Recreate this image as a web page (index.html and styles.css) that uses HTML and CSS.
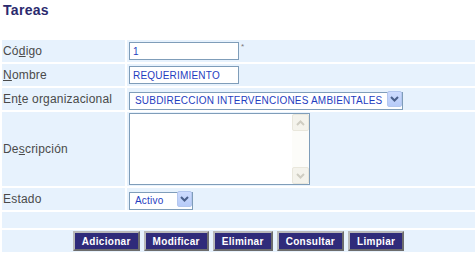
FILE: index.html
```html
<!DOCTYPE html>
<html lang="es">
<head>
<meta charset="utf-8">
<title>Tareas</title>
<link rel="stylesheet" href="styles.css">
</head>
<body>
<h1 class="title">Tareas</h1>
<form class="form">
  <label class="lbl" for="codigo">Có<u>d</u>igo</label>
  <div class="fld"><input id="codigo" class="txt" value="1"><span class="req">*</span></div>

  <label class="lbl" for="nombre"><u>N</u>ombre</label>
  <div class="fld"><input id="nombre" class="txt" value="REQUERIMIENTO"></div>

  <label class="lbl" for="ente">En<u>t</u>e organizacional</label>
  <div class="fld">
    <span class="sel sel-wide">
      <select id="ente"><option>SUBDIRECCION INTERVENCIONES AMBIENTALES</option></select>
      <span class="arrow"><svg width="9" height="6" viewBox="0 0 9 6"><path d="M1 1 L4.5 4.5 L8 1" fill="none" stroke="#4a5f8a" stroke-width="2"/></svg></span>
    </span>
  </div>

  <label class="lbl" for="desc">De<u>s</u>cripción</label>
  <div class="fld">
    <span class="ta">
      <textarea id="desc"></textarea>
      <span class="sb">
        <span class="sb-btn"><svg width="9" height="6" viewBox="0 0 9 6"><path d="M1 5 L4.5 1.5 L8 5" fill="none" stroke="#cfcdc2" stroke-width="2"/></svg></span>
        <span class="sb-track"></span>
        <span class="sb-btn"><svg width="9" height="6" viewBox="0 0 9 6"><path d="M1 1 L4.5 4.5 L8 1" fill="none" stroke="#cfcdc2" stroke-width="2"/></svg></span>
      </span>
    </span>
  </div>

  <label class="lbl" for="estado">Estado</label>
  <div class="fld">
    <span class="sel sel-small">
      <select id="estado"><option>Activo</option></select>
      <span class="arrow"><svg width="9" height="6" viewBox="0 0 9 6"><path d="M1 1 L4.5 4.5 L8 1" fill="none" stroke="#4a5f8a" stroke-width="2"/></svg></span>
    </span>
  </div>

  <div class="empty"></div>

  <div class="actions">
    <button type="button" class="btn">Adicionar</button>
    <button type="button" class="btn">Modificar</button>
    <button type="button" class="btn">Eliminar</button>
    <button type="button" class="btn">Consultar</button>
    <button type="button" class="btn">Limpiar</button>
  </div>
</form>
</body>
</html>
```
FILE: styles.css
```css
html, body {
  margin: 0;
  padding: 0;
  background: #ffffff;
  font-family: "Liberation Sans", Arial, sans-serif;
}

.title {
  margin: 2px 0 0 3px;
  height: 16px;
  line-height: 16px;
  font-size: 14px;
  font-weight: bold;
  color: #2b2a6e;
  letter-spacing: 0.3px;
}

.form {
  margin-top: 20px;
  display: grid;
  grid-template-columns: 123px 1fr;
  grid-template-rows: 22px 22px 22px 74px 22px 16px 22px;
  gap: 2px;
  padding: 2px 0 2px 2px;
}

.lbl {
  background: #e7f2fd;
  display: flex;
  align-items: center;
  padding-left: 1px;
  font-size: 12px;
  color: #4a4a4a;
  letter-spacing: 0.2px;
}

.lbl u {
  text-decoration: underline;
}

.fld {
  background: #e7f2fd;
  display: flex;
  align-items: center;
  padding-left: 2px;
}

.txt {
  box-sizing: border-box;
  width: 110px;
  height: 18px;
  margin: 0;
  padding: 0 3px;
  border: 1px solid #7f9db9;
  background: #fff;
  font-family: "Liberation Sans", Arial, sans-serif;
  font-size: 10px;
  letter-spacing: 0.2px;
  color: #1f3dbf;
  outline: none;
}

.req {
  align-self: flex-start;
  margin: 3px 0 0 2px;
  font-size: 8px;
  line-height: 8px;
  color: #777;
}

.sel {
  position: relative;
  display: inline-block;
  height: 18px;
}

.sel select {
  appearance: none;
  -webkit-appearance: none;
  box-sizing: border-box;
  height: 18px;
  width: 100%;
  margin: 0;
  padding: 0 0 0 5px;
  border: 1px solid #7f9db9;
  border-radius: 0;
  background: #fff;
  font-family: "Liberation Sans", Arial, sans-serif;
  font-size: 10px;
  letter-spacing: 0.2px;
  color: #1f3dbf;
  outline: none;
}

.sel-wide { width: 274px; }
.sel-small { width: 64px; }

.arrow {
  position: absolute;
  right: 1px;
  top: 1px;
  width: 15px;
  height: 16px;
  box-sizing: border-box;
  border: 1px solid #b4c7ef;
  border-radius: 2px;
  background: linear-gradient(#cddbfd, #b7cbf8);
  display: flex;
  align-items: center;
  justify-content: center;
  pointer-events: none;
}

.ta {
  position: relative;
  display: inline-block;
  width: 181px;
  height: 72px;
}

.ta textarea {
  box-sizing: border-box;
  display: block;
  width: 181px;
  height: 72px;
  margin: 0;
  padding: 2px 20px 2px 3px;
  border: 1px solid #7f9db9;
  background: #fff;
  resize: none;
  overflow: hidden;
  font-family: "Liberation Sans", Arial, sans-serif;
  font-size: 10px;
  outline: none;
}

.sb {
  position: absolute;
  top: 1px;
  right: 1px;
  bottom: 1px;
  width: 17px;
  display: flex;
  flex-direction: column;
  background: #fcfcf9;
}

.sb-btn {
  box-sizing: border-box;
  height: 17px;
  border: 1px solid #e9e7dc;
  border-radius: 2px;
  background: #f4f3ec;
  display: flex;
  align-items: center;
  justify-content: center;
}

.sb-track {
  flex: 1;
}

.empty {
  grid-column: 1 / -1;
  background: #e7f2fd;
}

.actions {
  grid-column: 1 / -1;
  background: #e7f2fd;
  display: flex;
  justify-content: center;
  align-items: center;
  gap: 4px;
}

.btn {
  box-sizing: border-box;
  height: 20px;
  margin: 0;
  padding: 0 7px;
  border: 2px solid;
  border-color: #b9b9b9 #6d6d6d #6d6d6d #b9b9b9;
  background: #2f2b7a;
  color: #ffffff;
  font-family: "Liberation Sans", Arial, sans-serif;
  font-size: 10px;
  font-weight: bold;
  letter-spacing: 0.3px;
  cursor: pointer;
}
```
